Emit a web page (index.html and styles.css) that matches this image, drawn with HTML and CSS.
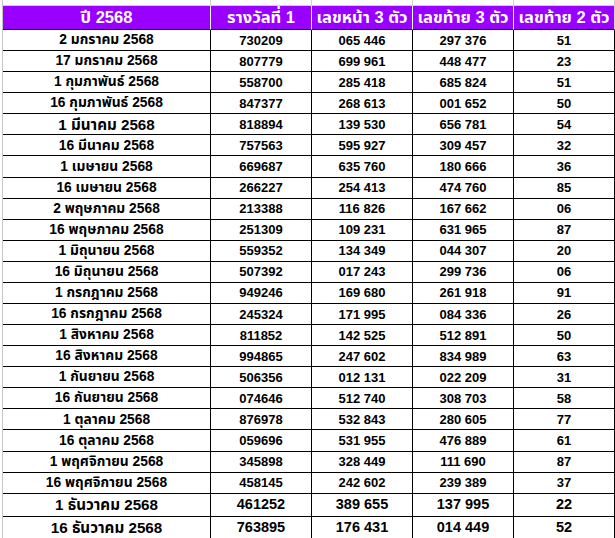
FILE: index.html
```html
<!DOCTYPE html>
<html lang="th">
<head>
<meta charset="utf-8">
<title>ผลสลากกินแบ่งรัฐบาล ปี 2568</title>
<link rel="stylesheet" href="styles.css">
</head>
<body>
<div class="sheet">
  <div class="grid">
    <div class="gl"></div><div class="gl"></div><div class="gl"></div><div class="gl"></div><div class="gl"></div>
    <div class="hd">ปี 2568</div><div class="hd">รางวัลที่ 1</div><div class="hd">เลขหน้า 3 ตัว</div><div class="hd">เลขท้าย 3 ตัว</div><div class="hd last">เลขท้าย 2 ตัว</div>

    <div class="c d">2 มกราคม 2568</div><div class="c">730209</div><div class="c">065 446</div><div class="c">297 376</div><div class="c">51</div>
    <div class="c d">17 มกราคม 2568</div><div class="c">807779</div><div class="c">699 961</div><div class="c">448 477</div><div class="c">23</div>
    <div class="c d">1 กุมภาพันธ์ 2568</div><div class="c">558700</div><div class="c">285 418</div><div class="c">685 824</div><div class="c">51</div>
    <div class="c d">16 กุมภาพันธ์ 2568</div><div class="c">847377</div><div class="c">268 613</div><div class="c">001 652</div><div class="c">50</div>
    <div class="c d big">1 มีนาคม 2568</div><div class="c">818894</div><div class="c">139 530</div><div class="c">656 781</div><div class="c">54</div>
    <div class="c d">16 มีนาคม 2568</div><div class="c">757563</div><div class="c">595 927</div><div class="c">309 457</div><div class="c">32</div>
    <div class="c d">1 เมษายน 2568</div><div class="c">669687</div><div class="c">635 760</div><div class="c">180 666</div><div class="c">36</div>
    <div class="c d">16 เมษายน 2568</div><div class="c">266227</div><div class="c">254 413</div><div class="c">474 760</div><div class="c">85</div>
    <div class="c d">2 พฤษภาคม 2568</div><div class="c">213388</div><div class="c">116 826</div><div class="c">167 662</div><div class="c">06</div>
    <div class="c d">16 พฤษภาคม 2568</div><div class="c">251309</div><div class="c">109 231</div><div class="c">631 965</div><div class="c">87</div>
    <div class="c d">1 มิถุนายน 2568</div><div class="c">559352</div><div class="c">134 349</div><div class="c">044 307</div><div class="c">20</div>
    <div class="c d">16 มิถุนายน 2568</div><div class="c">507392</div><div class="c">017 243</div><div class="c">299 736</div><div class="c">06</div>
    <div class="c d">1 กรกฎาคม 2568</div><div class="c">949246</div><div class="c">169 680</div><div class="c">261 918</div><div class="c">91</div>
    <div class="c d">16 กรกฎาคม 2568</div><div class="c">245324</div><div class="c">171 995</div><div class="c">084 336</div><div class="c">26</div>
    <div class="c d">1 สิงหาคม 2568</div><div class="c">811852</div><div class="c">142 525</div><div class="c">512 891</div><div class="c">50</div>
    <div class="c d">16 สิงหาคม 2568</div><div class="c">994865</div><div class="c">247 602</div><div class="c">834 989</div><div class="c">63</div>
    <div class="c d">1 กันยายน 2568</div><div class="c">506356</div><div class="c">012 131</div><div class="c">022 209</div><div class="c">31</div>
    <div class="c d">16 กันยายน 2568</div><div class="c">074646</div><div class="c">512 740</div><div class="c">308 703</div><div class="c">58</div>
    <div class="c d">1 ตุลาคม 2568</div><div class="c">876978</div><div class="c">532 843</div><div class="c">280 605</div><div class="c">77</div>
    <div class="c d">16 ตุลาคม 2568</div><div class="c">059696</div><div class="c">531 955</div><div class="c">476 889</div><div class="c">61</div>
    <div class="c d">1 พฤศจิกายน 2568</div><div class="c">345898</div><div class="c">328 449</div><div class="c">111 690</div><div class="c">87</div>
    <div class="c d">16 พฤศจิกายน 2568</div><div class="c">458145</div><div class="c">242 602</div><div class="c">239 389</div><div class="c">37</div>
    <div class="c d big">1 ธันวาคม 2568</div><div class="c big">461252</div><div class="c big">389 655</div><div class="c big">137 995</div><div class="c big">22</div>
    <div class="c d big">16 ธันวาคม 2568</div><div class="c big">763895</div><div class="c big">176 431</div><div class="c big">014 449</div><div class="c big">52</div>
  </div>
</div>
</body>
</html>
```

FILE: styles.css
```css
html, body {
  margin: 0;
  padding: 0;
  background: #ffffff;
}

body {
  width: 615px;
  height: 538px;
  overflow: hidden;
  font-family: "Liberation Sans", "Noto Sans Thai", "Loma", "Garuda", "DejaVu Sans", sans-serif;
  font-weight: bold;
  color: #000000;
}

.sheet {
  margin-left: 2px;
  border-left: 1px solid #c6c6c6;
  height: 538px;
}

.grid {
  display: grid;
  grid-template-columns: 208px 101px 101px 101px 101px;
  grid-template-rows: 6px 24px repeat(22, 21.09px) 23px 23px;
}

.gl {
  box-sizing: border-box;
  border-right: 1px solid #d0d0d0;
  border-bottom: 1px solid #d0d0d0;
}

.hd {
  box-sizing: border-box;
  background: #9900ff;
  color: #ffffff;
  font-size: 16.5px;
  display: flex;
  align-items: center;
  justify-content: center;
  white-space: nowrap;
  border-right: 1px solid #ffffff;
  border-bottom: 1px solid #000000;
  line-height: 1;
}

.hd.last {
  border-right: 1px solid #d0d0d0;
}

.c {
  box-sizing: border-box;
  font-size: 13px;
  display: flex;
  align-items: center;
  justify-content: center;
  white-space: nowrap;
  border-right: 1px solid #000000;
  border-bottom: 1px solid #000000;
  line-height: 1;
}

.c.d {
  font-size: 13.8px;
}

.c.big {
  font-size: 14.5px;
}

.c.d.big {
  font-size: 15.2px;
}
```
